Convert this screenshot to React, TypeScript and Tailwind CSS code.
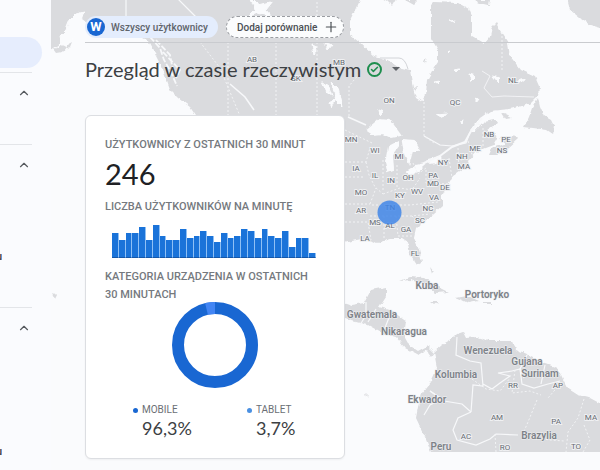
import { Check, ChevronUp, Plus } from "lucide-react";

const BARS = [
  24, 17, 24, 24, 30, 17, 32, 21, 17, 17, 28, 19, 21, 26, 21, 15, 24, 19, 21,
  28, 26, 19, 28, 21, 19, 26, 10, 19, 19, 4,
];

const DEVICES = [
  { name: "MOBILE", value: "96,3%", dot: "bg-[#1967d2]" },
  { name: "TABLET", value: "3,7%", dot: "bg-[#4a90e2]" },
];

// [label, center x, baseline y]
const REGIONS: Array<[string, number, number]> = [
  ["AB", 252, 62],
  ["MB", 339, 65],
  ["SK", 296, 81],
  ["ON", 389, 103],
  ["QC", 455, 105],
  ["NL", 513, 83],
  ["MN", 351, 142],
  ["WI", 375, 153],
  ["MI", 399, 159],
  ["IA", 356, 171],
  ["IL", 375, 178],
  ["IN", 391, 183],
  ["OH", 408, 180],
  ["PA", 433, 178],
  ["MD", 433, 186],
  ["DE", 445, 190],
  ["NY", 443, 165],
  ["NH", 462, 159],
  ["MA", 464, 169],
  ["ME", 475, 151],
  ["NB", 489, 137],
  ["PE", 506, 142],
  ["NS", 502, 153],
  ["MO", 361, 195],
  ["KY", 400, 198],
  ["WV", 417, 194],
  ["VA", 434, 200],
  ["AR", 361, 213],
  ["TN", 390, 210],
  ["NC", 428, 211],
  ["MS", 375, 225],
  ["AL", 390, 228],
  ["SC", 420, 223],
  ["GA", 406, 232],
  ["LA", 365, 241],
  ["FL", 415, 256],
  ["RR", 513, 388],
  ["AP", 558, 388],
  ["AM", 497, 420],
  ["PA", 556, 424],
  ["MA", 591, 420],
  ["AC", 466, 439],
  ["RO", 505, 450],
  ["TO", 576, 449],
];

const COUNTRIES: Array<[string, number, number]> = [
  ["Kuba", 427, 289],
  ["Portoryko", 487, 298],
  ["Gwatemala", 372, 318],
  ["Nikaragua", 404, 335],
  ["Wenezuela", 488, 354],
  ["Gujana", 527, 365],
  ["Surinam", 540, 377],
  ["Kolumbia", 456, 378],
  ["Ekwador", 427, 403],
  ["Brazylia", 539, 439],
  ["Peru", 441, 450],
];

function WorldMap() {
  return (
    <svg
      width="549"
      height="470"
      viewBox="51 0 549 470"
      className="absolute left-0 top-0"
      role="img"
      aria-label="Mapa użytkowników"
    >
      <defs>
        <clipPath id="map-area">
          <rect x="51" y="0" width="549" height="452" />
        </clipPath>
        <filter id="coast" x="-5%" y="-5%" width="110%" height="110%">
          <feTurbulence type="fractalNoise" baseFrequency="0.16" numOctaves="2" seed="4" />
          <feDisplacementMap in="SourceGraphic" scale="5" xChannelSelector="R" yChannelSelector="G" />
        </filter>
      </defs>
      <g clipPath="url(#map-area)">
        {/* Land */}
        <g fill="#dadbde" filter="url(#coast)">
          <path d="M40-10H364L356 8 350 20 350 35 359 42 374 56 386 59 398 67 410 70 413 88 416 98 422 102 426 95 427 80 432 71 438 62 438 50 431 38 431 5 434 2 458 3 469 9 472 16 472 36 484 43 490 36 492 27 496 23 501 32 508 43 510 57 520 70 535 77 539 86 538 96 530 104 510 109 490 111 480 118 470 130 473 133 484 121 494 119 497 124 488 130 498 138 494 145 486 148 476 152 468 161 470 167 462 170 453 176 446 188 442 196 442 206 433 214 424 221 416 229 414 238 419 249 422 262 417 266 411 257 408 243 402 239 390 239 383 241 378 244 366 238 352 241 340 244 200 220 196 116 190 107 178 98 170 90 163 70 155 54 148 41 140 37 108 36 90 26 82 20 76 24 68 32 60 44 48 52 40 54Z" />
          <path d="M54 49 60 46 66 48 63 52 57 53ZM66 46 73 42 71 47 66 50Z" />
          <path d="M166 72 170 76 174 90 169 86Z" />
          <path d="M538 98 540 107 544 116 551 120 554 126 553 134 547 130 540 129 524 127 529 117 532 108Z" />
          <path d="M489 155 492 148 504 144 514 134 518 139 508 148 496 155ZM502 113 512 118 506 119ZM500 137 509 142 505 144Z" />
          <path d="M566-5 570 10 580 18 590 25 605 29V-5Z" />
          <path d="M474 0H490L489 5 480 3ZM404 0 418 0 413 5ZM378-4 398-4 392 6 387 1ZM424 60 427 57 425 64ZM413 88 417 87 416 91Z" />
          <path d="M340 301 352 305 364 303 371 290 386 287 386 296 379 307 392 311 406 321 404 336 409 345 418 351 427 346 434 353 431 357 426 350 418 355 405 348 396 337 384 334 368 325 340 318Z" />
          <path d="M399 281 409 277 424 278 435 285 449 292 436 293 425 284 411 280Z" />
          <path d="M455 297 466 295 479 301 468 303 462 300ZM431 302H439L435 305ZM483 302H491V304H483ZM430 267 434 272 432 274Z" />
          <path d="M53 293 58 295 56 299Z" />
          <path d="M366 393 369 396 367 397Z" />
          <path d="M434 352 442 345 451 340 457 334 463 332 466 338 477 337 489 341 512 341 515 350 527 355 543 363 558 368 562 378 567 388 578 395 590 398 605 406V460H434L425 437 416 418 418 407 422 393 430 383 437 368Z" />
        </g>

        {/* Lakes and rivers */}
        <g fill="#fafbfd" stroke="#fafbfd" strokeWidth="1" filter="url(#coast)">
          <path d="M84 12 76 14 70 20 66 30 60 36 62 46 70 42 76 34 80 24Z" />
          <path d="M250-3 258 5 273 1 266 10 272 17 258 13 247 17 255 9Z" />
          <path d="M367 130 379 120 390 121 400 135 391 137 383 133 373 134Z" strokeWidth="2" />
          <path d="M398 142 389 147 386 162 388 171 393 169 392 155 398 147Z" strokeWidth="2" />
          <path d="M403 141 414 142 419 151 412 151 409 162 405 154Z" strokeWidth="2" />
          <path d="M408 171 416 166 425 164 417 171 410 174ZM428 160 440 157 441 161 431 163Z" strokeWidth="2" />
          <path d="M322 82 329 87 332 96 327 93ZM332 82 338 88 342 107 336 101ZM336 99 332 108 330 103Z" />
          <path d="M312 44 317 46 314 55ZM325 43 332 45 328 50ZM259 29 266 32 262 36ZM379 110 384 112 380 115Z" />
          <path d="M469 74 476 76 471 81ZM492 76 501 78 497 82ZM514 82 526 79 521 83ZM434 82 440 81 437 84ZM476 97 479 99 476 103Z" />
          <path d="M447 52 450 51 449 54ZM449 21 455 20 453 23ZM454 70 460 69 457 72ZM437 114 447 113 442 117ZM460 121 464 120 462 124Z" />
        </g>

        <g fill="none" stroke="#f7f8fa" strokeWidth="1.2">
          <path d="M126-2V18H134L148 37M177-2 188 9 196 17" />
          <path d="M150 37 160 48 164 60 171 72 177 86M156 40 170 55 173 70M163 52 180 70 176 78" strokeWidth="1.8" strokeDasharray="6 2" />
          <path d="M230 84 245 97 254 110M348 117 366 125" strokeWidth="1.6" />
          <path d="M424 136 440 145 452 146 466 143 470 132" />
          <path d="M424 163 440 156 452 147 465 142 471 131 482 118" strokeWidth="2" />
          <path d="M504 96 534 97M482 71 490 76 484 88 492 97 504 96" strokeWidth="0.8" />
          <path d="M457 337 456 355 470 361 481 363 483 386 473 385 471 412M483 384 492 389 500 383 510 376 498 373 512 371" />
          <path d="M512 371 520 369 522 384 534 388 548 384 560 381M471 412 462 404 444 401 430 391" />
          <path d="M471 412 458 418 453 430 457 440 476 445 490 439 496 434 518 435M430 391 442 399 430 405 424 415" />
          <path d="M527 355 520 369 524 378M545 365 541 384M366 302V315L360 325M376 309 368 322M390 315 383 333" />
        </g>

        {/* Province and state borders */}
        <g fill="none" stroke="#f2f3f5" strokeWidth="1" strokeDasharray="2 2">
          <path d="M228 42V116M276 42V116M317-2V116M349 116V86L360 73M424 102V136L434 143M502 32V72M200 42 220 68 240 116" />
          <path d="M345 130 372 143M345 162H366L370 148M366 162 369 175 375 187 383 194M345 177H364M345 204H370M370 204 376 188M345 222H368L371 240M383 160V190M397 165V188M413 163 418 174 426 168V183M383 194 400 188 412 190 420 178" />
          <path d="M372 205H410L438 202M370 216H412L430 214M384 216V240M396 216 398 236M412 216 421 226M398 236H414M426 183 449 184M449 158 452 178M458 148 459 171M468 141 472 155M483 128V147" />
          <path d="M472 379 486 389 500 391 510 378M515 370 512 393 530 391 541 395M537 400 528 422 522 436M560 384 548 398M584 399 578 418 568 432 566 452M584 425 590 440 583 452M522 436 550 440 564 441M495 434 496 452" />
        </g>

        {/* Thin outline at the south end of Hudson Bay */}
        <path d="M380 58H399Q405 58 408 69" fill="none" stroke="#d2d4d8" />

        <g fill="#666b72" fontSize="8" textAnchor="middle" className="font-['Roboto',sans-serif]">
          {REGIONS.map(([name, x, y]) => (
            <text key={`${name}-${x}`} x={x} y={y} stroke="#eff0f2" strokeWidth="2" paintOrder="stroke">
              {name}
            </text>
          ))}
        </g>
        <g fill="#7d8288" fontSize="10" fontWeight="600" textAnchor="middle" className="font-['Roboto',sans-serif]">
          {COUNTRIES.map(([name, x, y]) => (
            <text key={name} x={x} y={y} stroke="#eff0f2" strokeWidth="1" paintOrder="stroke">
              {name}
            </text>
          ))}
        </g>

        <circle cx="389.5" cy="212.5" r="12" fill="#3b82e8" opacity="0.82" />
      </g>
    </svg>
  );
}

function NavToggle({ label }: { label: string }) {
  return (
    <button type="button" aria-label={label} className="ml-4 flex size-4 items-center justify-center text-[#55595e]">
      <ChevronUp size={14} strokeWidth={2} />
    </button>
  );
}

// Tail of a menu entry that runs out of the collapsed sidebar
function ClippedEntry() {
  return (
    <div className="flex h-3 w-0.5 justify-end overflow-hidden text-[11px] leading-3 font-medium text-[#3c4043]">
      u
    </div>
  );
}

function Sidebar() {
  return (
    <nav className="w-[51px] shrink-0 bg-[#fafbfe]">
      <div className="mt-[37px] h-[31px] w-[42px] rounded-r-full bg-[#e6edfd]" />
      <hr className="mt-1 w-8 border-[#e3e5e9]" />
      <div className="flex h-[71px] flex-col pt-3">
        <NavToggle label="Zwiń sekcję 1" />
      </div>
      <hr className="w-8 border-[#e3e5e9]" />
      <div className="flex h-[162px] flex-col justify-between pt-3 pb-11">
        <NavToggle label="Zwiń sekcję 2" />
        <ClippedEntry />
      </div>
      <hr className="w-8 border-[#e3e5e9]" />
      <div className="flex h-[150px] flex-col justify-between pt-3">
        <NavToggle label="Zwiń sekcję 3" />
        <ClippedEntry />
      </div>
    </nav>
  );
}

function UsersChart() {
  return (
    <div className="mt-1.5 ml-[7px] flex h-9 w-[204px] items-end">
      {BARS.map((height, i) => (
        <div
          key={i}
          className="flex-1 border-r border-[#8fc0f5] border-b border-b-[#1557a8] bg-[#1a73d9]"
          style={{ height: height + 1 }}
        />
      ))}
    </div>
  );
}

function DeviceDonut() {
  return (
    <svg width="86" height="86" viewBox="0 0 86 86" className="mx-auto -mt-0.5" role="img" aria-label="Kategoria urządzenia">
      <g fill="none" strokeWidth="12" transform="rotate(-90 43 43)">
        <circle cx="43" cy="43" r="37" stroke="#1967d2" />
        <circle cx="43" cy="43" r="37" stroke="#4285f4" pathLength="100" strokeDasharray="3.7 96.3" strokeDashoffset="-96.3" />
      </g>
    </svg>
  );
}

function CardHeading({ children }: { children: string }) {
  return <h2 className="pr-3 text-[11px] leading-[18px] font-medium text-[#75797e]">{children}</h2>;
}

function RealtimeCard() {
  return (
    <section className="mt-8 w-[260px] rounded-md border border-[#dcdee2] bg-white px-[19px] pt-5 pb-[18px] shadow-xs">
      <CardHeading>UŻYTKOWNICY Z OSTATNICH 30 MINUT</CardHeading>
      <p className="mt-0.5 font-['Lato',sans-serif] text-[29px] leading-9 text-[#202124]">246</p>
      <div className="mt-1.5">
        <CardHeading>LICZBA UŻYTKOWNIKÓW NA MINUTĘ</CardHeading>
      </div>
      <UsersChart />
      <div className="mt-2.5">
        <CardHeading>KATEGORIA URZĄDZENIA W OSTATNICH 30 MINUTACH</CardHeading>
      </div>
      <DeviceDonut />
      <dl className="mt-4 ml-7 grid grid-cols-[114px_1fr]">
        {DEVICES.map((device) => (
          <div key={device.name}>
            <dt className="flex items-center gap-1 text-[10px] leading-3 text-[#6b6f75]">
              <span className={`size-[5px] rounded-full ${device.dot}`} />
              {device.name}
            </dt>
            <dd className="ml-[9px] font-['Lato',sans-serif] text-lg leading-6 text-[#3c4043]">{device.value}</dd>
          </div>
        ))}
      </dl>
    </section>
  );
}

export default function App() {
  return (
    <div className="flex min-h-screen overflow-hidden bg-[#fafbfd] font-['Roboto',sans-serif]">
      <Sidebar />
      <main className="relative min-w-0 flex-1">
        <WorldMap />
        <div className="relative pt-4 pl-[34px]">
          <div className="flex items-center gap-2 border-b border-[#c9cbcf] pb-1">
            <button
              type="button"
              className="flex h-[22px] items-center gap-1.5 rounded-full bg-[#e4edfd] pr-2.5 pl-0.5 text-[10px] font-medium text-[#5f646b]"
            >
              <span className="flex size-[18px] items-center justify-center rounded-full bg-[#1967d2] text-[13px] font-bold text-white">
                W
              </span>
              Wszyscy użytkownicy
            </button>
            <button
              type="button"
              className="flex h-[22px] items-center gap-1.5 rounded-full border border-dashed border-[#9a9da2] bg-[#fbfcfd] pr-1 pl-2.5 text-[10px] font-medium text-[#4b4f54]"
            >
              Dodaj porównanie
              <Plus size={16} strokeWidth={1.75} />
            </button>
          </div>

          <div className="mt-3 flex h-7 items-center">
            <h1 className="font-['Lato',sans-serif] text-xl leading-7 text-[#3c4043]">
              Przegląd w czasie rzeczywistym
            </h1>
            <span className="ml-1.5 flex size-[15px] items-center justify-center rounded-full border-2 border-[#1e8e4e] text-[#1e8e4e]">
              <Check size={9} strokeWidth={4} />
            </span>
            <button type="button" aria-label="Więcej" className="ml-1.5 flex size-4 items-center justify-center">
              <svg width="8" height="4" viewBox="0 0 8 4" fill="#5f6368">
                <path d="M0 0H8L4 4Z" />
              </svg>
            </button>
          </div>

          <RealtimeCard />
        </div>
      </main>
    </div>
  );
}
